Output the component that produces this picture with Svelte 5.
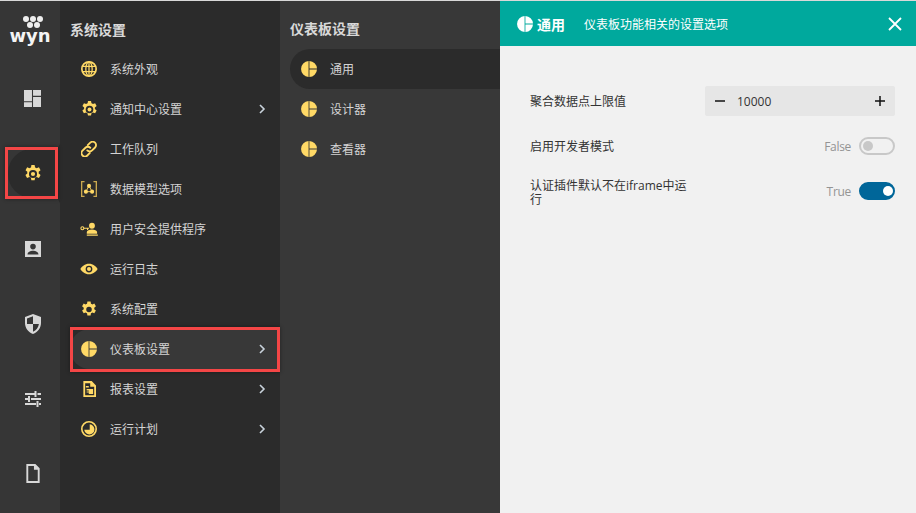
<script>
  const railIcons = ['dash', 'gear', 'contact', 'shield', 'sliders', 'doc'];

  const menu = [
    { label: '系统外观', icon: 'globe' },
    { label: '通知中心设置', icon: 'gearo', more: true },
    { label: '工作队列', icon: 'link' },
    { label: '数据模型选项', icon: 'model' },
    { label: '用户安全提供程序', icon: 'userkey' },
    { label: '运行日志', icon: 'eye' },
    { label: '系统配置', icon: 'cog' },
    { label: '仪表板设置', icon: 'pie', more: true, active: true },
    { label: '报表设置', icon: 'report', more: true },
    { label: '运行计划', icon: 'clock', more: true }
  ];

  const sub = [
    { label: '通用', active: true },
    { label: '设计器' },
    { label: '查看器' }
  ];

  // viewBox, width, height for each icon
  const boxes = {
    dash: ['4 4 16 16', 17, 17],
    gear: ['2 2 20 20', 18, 18],
    contact: ['4 4 16 16', 16, 16],
    shield: ['4 2 16 20', 16, 20],
    sliders: ['4 4 16 16', 16, 16],
    doc: ['5 2 14 20', 14, 19],
    globe: ['2.5 2.5 19 19', 16, 16],
    gearo: ['2 2 20 20', 17, 17],
    link: ['2.5 2.5 19 19', 16, 16],
    model: ['3 3 18 18', 16, 16],
    userkey: ['0 3 24 19', 18, 14],
    eye: ['0 4 24 16', 18, 12],
    cog: ['1 0 22 22.6', 16, 17],
    pie: ['1 1 22 22', 16, 16],
    report: ['3 1 18 22', 13, 16],
    clock: ['1 1 22 22', 16, 16]
  };

  const gear =
    'M10.2 1h3.6l.5 2.7c.6.2 1.2.5 1.7.9l2.6-1 1.8 3.2-2.100 1.800c.1.6.1 1.200 0 1.800l2.100 1.800-1.800 3.200-2.600-1c-.5.4-1.100.7-1.700.9l-.5 2.700h-3.600l-.5-2.700c-.6-.2-1.200-.5-1.700-.9l-2.600 1-1.800-3.200 2.100-1.800c-.1-.6-.1-1.200 0-1.800L3.700 6.800l1.800-3.200 2.600 1c.5-.4 1.100-.7 1.700-.9z';
</script>

{#snippet icon(name)}
  <svg viewBox={boxes[name][0]} width={boxes[name][1]} height={boxes[name][2]} aria-hidden="true">
    {#if name === 'dash'}
      <path d="M4 4h7.500v10.500H4zM12.500 4H20v5.500h-7.500zM12.500 10.500H20V20h-7.500zM4 15.500h7.500V20H4z" />
    {:else if name === 'gear'}
      <g transform="translate(0 1)"><path fill-rule="evenodd" d="{gear}M12 6.500a4.500 4.500 0 1 0 0 9 4.500 4.500 0 0 0 0-9z" /></g>
      <circle cx="12" cy="12" r="2.300" />
    {:else if name === 'contact'}
      <path fill-rule="evenodd" d="M4 4h16v16H4zM12 6.800a2.800 2.800 0 1 0 0 5.600 2.800 2.800 0 0 0 0-5.600zM6.500 17.500h11c0-2.600-3-3.800-5.500-3.800s-5.500 1.200-5.500 3.800z" />
    {:else if name === 'shield'}
      <path fill-rule="evenodd" d="M12 2l8 3v6c0 5-3.300 9.200-8 11-4.700-1.800-8-6-8-11V5zM12 4.200L6 6.400V12h6zM12 12v7.800c3.200-1.400 5.400-4.300 5.900-7.800z" />
    {:else if name === 'sliders'}
      <path d="M4 6h9.500v2H4zM16.500 6H20v2h-3.500zM13.500 4h2v6h-2zM4 11h3v2H4zM10 11h10v2H10zM7 9h2v6H7zM4 16h11v2H4zM18 16h2v2h-2zM15.500 14h2v6h-2z" />
    {:else if name === 'doc'}
      <path fill-rule="evenodd" d="M5 2h9.500L19 6.500V22H5zM7 4v16h10V8h-4V4z" />
    {:else if name === 'globe'}
      <g fill="none" stroke="#ffd966" stroke-width="1.500"><circle cx="12" cy="12" r="8.500" stroke-width="2" /><ellipse cx="12" cy="12" rx="3.800" ry="8.500" /><path d="M4 9h16M4 15h16M12 3v18" /></g>
    {:else if name === 'gearo'}
      <g transform="translate(0 1)"><path fill-rule="evenodd" d="{gear}M12 6.500a4.500 4.500 0 1 0 0 9 4.500 4.500 0 0 0 0-9z" /></g>
      <circle cx="12" cy="12" r="2.300" />
    {:else if name === 'link'}
      <g fill="none" stroke="#ffd966" stroke-width="2.200" stroke-linecap="round"><path d="M10.500 7.500l3-3a4 4 0 0 1 5.700 5.700l-3.500 3.500a4 4 0 0 1-5.700 0" /><path d="M13.500 10.500a4 4 0 0 0-5.700 0l-3.500 3.500a4 4 0 0 0 5.700 5.700l3-3" /></g>
    {:else if name === 'model'}
      <path d="M7 3H3v18h4v-1.500H4.500v-15H7zM17 3h4v18h-4v-1.500h2.500v-15H17z" fill="#c9a84f" />
      <path d="M12 8.500l-3.500 6.500h7z" fill="none" stroke="#ffd966" />
      <circle cx="12" cy="8.500" r="2.300" /><circle cx="8.500" cy="15" r="2.300" /><circle cx="15.500" cy="15" r="2.300" />
    {:else if name === 'userkey'}
      <circle cx="16" cy="8" r="4" /><path d="M9 19v-2c0-2.500 3.500-3.800 7-3.800s7 1.300 7 3.800v2zM9 20h15v1.500H9z" />
      <circle cx="3" cy="11.500" r="2" fill="none" stroke="#ffd966" stroke-width="1.500" /><path d="M5 10.800h7v1.500h-1.200v1.500H9.300v-1.500H5z" />
    {:else if name === 'eye'}
      <path fill-rule="evenodd" d="M12 5c5.500 0 9.500 3.500 11.500 7-2 3.500-6 7-11.500 7S2.500 15.500.5 12C2.500 8.500 6.500 5 12 5zM12 7.500a4.500 4.500 0 1 0 0 9 4.500 4.500 0 0 0 0-9z" />
      <circle cx="12" cy="12" r="2.700" />
    {:else if name === 'cog'}
      <path fill-rule="evenodd" d="M9.800 1h4.400l.5 2.900c.7.200 1.300.6 1.900 1l2.700-1.100 2.200 3.800-2.300 1.900c.1.700.1 1.300 0 2l2.300 1.900-2.200 3.800-2.700-1.100c-.6.400-1.200.8-1.900 1l-.5 2.900H9.800l-.5-2.900c-.7-.2-1.300-.6-1.900-1l-2.700 1.100-2.200-3.800 2.300-1.900c-.1-.7-.1-1.300 0-2L2.500 7.600l2.200-3.800 2.700 1.100c.6-.4 1.200-.8 1.900-1zM12 8.200a3.800 3.800 0 1 0 0 7.600 3.800 3.800 0 0 0 0-7.600z" transform="translate(0 -.6)" />
    {:else if name === 'pie'}
      <path d="M11.400 1.020A11 11 0 0 0 11.400 22.980zM12.600 1.020A11 11 0 0 1 22.980 11.400H12.600zM12.600 22.980A11 11 0 0 0 22.980 12.600H12.600z" />
    {:else if name === 'report'}
      <path fill-rule="evenodd" d="M3.500 1H15l6 6v16H3.500zM6 4v16.500h12.500V9H13V4zM7 8h4v2H7z" />
      <path d="M8 12h9v7h-6v-2H8v-1.500h3V14H8z" />
    {:else if name === 'clock'}
      <path fill-rule="evenodd" d="M12 1a11 11 0 1 1 0 22 11 11 0 0 1 0-22zM12 3.200a8.800 8.800 0 1 0 0 17.600 8.800 8.800 0 0 0 0-17.600z" />
      <path d="M13 5.500a7 7 0 1 1-7.500 7.500H13z" />
    {/if}
  </svg>
{/snippet}

<div class="shell">
  <nav class="rail">
    <div class="logo">
      <div class="dots">
        <span></span><span></span><span></span>
        <span></span><span></span>
      </div>
      <div class="wyn">wyn</div>
    </div>
    {#each railIcons as name}
      <div class="rail-item" class:active={name === 'gear'}>{@render icon(name)}</div>
    {/each}
  </nav>

  <section class="menu">
    <h2>系统设置</h2>
    {#each menu as item}
      <div class="row" class:active={item.active}>
        <span class="ico">{@render icon(item.icon)}</span>
        <span class="label">{item.label}</span>
        {#if item.more}
          <svg class="chev" viewBox="0 0 8 12" width="8" height="12"><path d="M2 2l4 4-4 4" fill="none" stroke="#c9d3dc" stroke-width="1.600" /></svg>
        {/if}
      </div>
    {/each}
  </section>

  <section class="submenu">
    <h2>仪表板设置</h2>
    {#each sub as item}
      <div class="row" class:active={item.active}>
        <span class="ico">{@render icon('pie')}</span>
        <span class="label">{item.label}</span>
      </div>
    {/each}
  </section>

  <main class="detail">
    <header>
      <span class="head-ico">{@render icon('pie')}</span>
      <strong>通用</strong>
      <span class="desc">仪表板功能相关的设置选项</span>
      <svg class="close" viewBox="0 0 14 14" width="14" height="14"><path d="M1 1l12 12M13 1L1 13" stroke="#fff" stroke-width="1.800" fill="none" /></svg>
    </header>

    <div class="form">
      <div class="field">
        <span class="name">聚合数据点上限值</span>
        <div class="stepper">
          <svg viewBox="0 0 12 12" width="12" height="12"><path d="M1 6h10" stroke="#111" stroke-width="1.500" /></svg>
          <span class="num">10000</span>
          <svg viewBox="0 0 12 12" width="12" height="12"><path d="M1 6h10M6 1v10" stroke="#111" stroke-width="1.500" /></svg>
        </div>
      </div>
      <div class="field">
        <span class="name">启用开发者模式</span>
        <span class="state">False</span>
        <span class="toggle"></span>
      </div>
      <div class="field third">
        <span class="name">认证插件默认不在iframe中运行</span>
        <span class="state">True</span>
        <span class="toggle on"></span>
      </div>
    </div>
  </main>

  <div class="mark mark-rail"></div>
  <div class="mark mark-menu"></div>
</div>

<style>
  :global(body) {
    margin: 0;
    background: #2b2b2b;
  }

  .shell {
    position: relative;
    display: flex;
    width: 916px;
    height: 513px;
    box-sizing: border-box;
    border-top: 1px solid #d9d9d9;
    overflow: hidden;
    font-family: "Open Sans", "Noto Sans CJK SC", sans-serif;
    font-size: 12px;
  }

  svg {
    display: block;
    flex: none;
  }

  .rail {
    width: 60px;
    flex: none;
    background: #363636;
  }

  .logo {
    height: 60px;
    display: flex;
    flex-direction: column;
    align-items: center;
    padding-top: 15px;
    box-sizing: border-box;
  }

  .dots {
    width: 21px;
    margin-left: 6px;
    display: flex;
    flex-wrap: wrap;
    justify-content: center;
    gap: 0 1px;
  }

  .dots span {
    width: 6px;
    height: 6px;
    border-radius: 50%;
    background: #eee;
  }

  .wyn {
    font-family: "DejaVu Sans", sans-serif;
    font-weight: 700;
    font-size: 18px;
    line-height: 16px;
    color: #f4f4f4;
  }

  .rail-item {
    height: 75px;
    display: flex;
    align-items: center;
    justify-content: center;
    padding-left: 5px;
    fill: #d8d8d8;
  }

  .rail-item.active {
    position: relative;
    fill: #ffd966;
  }

  .rail-item.active::before {
    content: "";
    position: absolute;
    left: 8px;
    right: 0;
    top: 13px;
    bottom: 13px;
    background: #2b2b2b;
    border-radius: 24px 0 0 24px;
  }

  /* concave corners where the active pill joins the menu panel */
  .rail-item.active::after {
    content: "";
    position: absolute;
    right: 0;
    width: 6px;
    top: 7px;
    bottom: 7px;
    background:
      radial-gradient(circle at 0 0, #363636 5.5px, #2b2b2b 6px) top / 6px 6px no-repeat,
      radial-gradient(circle at 0 100%, #363636 5.5px, #2b2b2b 6px) bottom / 6px 6px no-repeat;
  }

  .rail-item.active svg {
    position: relative;
  }

  .menu,
  .submenu {
    width: 220px;
    flex: none;
    box-sizing: border-box;
    padding-left: 10px;
    color: #d4d4d4;
  }

  .menu {
    background: #2b2b2b;
  }

  .submenu {
    background: #383838;
  }

  h2 {
    margin: 0;
    height: 48px;
    line-height: 57px;
    font-size: 14px;
    font-weight: 700;
    color: #d9d9d9;
  }

  .submenu h2 {
    line-height: 55px;
  }

  .row {
    height: 40px;
    display: flex;
    align-items: center;
    padding-left: 10px;
    padding-right: 14px;
    border-radius: 20px 0 0 20px;
    fill: #ffd966;
  }

  .ico {
    display: flex;
    justify-content: center;
    flex: none;
    width: 30px;
    margin-left: -6px;
    padding-right: 6px;
  }

  .label {
    flex: 1;
  }

  .menu .row.active {
    background: #383838;
  }

  .submenu .row.active {
    background: #2b2b2b;
  }

  .detail {
    flex: 1;
    background: #f1f1f1;
    color: #333;
  }

  header {
    height: 45px;
    background: #00a99d;
    color: #fff;
    display: flex;
    align-items: center;
    padding: 0 14px 0 17px;
    fill: #fff;
  }

  header strong {
    margin-left: 4px;
    font-size: 14px;
    font-weight: 700;
  }

  .desc {
    margin-left: 19px;
    flex: 1;
  }

  .form {
    padding: 40px 21px 0 30px;
  }

  .field {
    display: flex;
    align-items: center;
    min-height: 30px;
    margin-bottom: 15px;
  }

  .field.third {
    margin-top: -1px;
  }

  .name {
    width: 160px;
    margin-right: auto;
    line-height: 14px;
    padding-top: 2px;
  }

  .third .name {
    padding-top: 4px;
  }

  .stepper {
    width: 190px;
    height: 30px;
    box-sizing: border-box;
    background: #e6e6e6;
    border-radius: 2px;
    display: flex;
    align-items: center;
    padding: 0 9px;
  }

  .num {
    flex: 1;
    margin-left: 11px;
  }

  .state {
    color: #949494;
    letter-spacing: -0.3px;
    margin-right: 8px;
  }

  .toggle {
    position: relative;
    width: 36px;
    height: 18px;
    box-sizing: border-box;
    border: 2px solid #c8c8c8;
    border-radius: 9px;
  }

  .toggle::after {
    content: "";
    position: absolute;
    left: 2px;
    top: 2px;
    width: 10px;
    height: 10px;
    border-radius: 50%;
    background: #c8c8c8;
  }

  .toggle.on {
    background: #006699;
    border-color: #006699;
  }

  .toggle.on::after {
    left: 22px;
    background: #fff;
  }

  .mark {
    position: absolute;
    box-sizing: border-box;
    border: 3px solid #f44646;
    box-shadow: 0 0 4px rgba(0, 0, 0, 0.4);
  }

  .mark-rail {
    left: 5px;
    top: 146px;
    width: 53px;
    height: 52px;
  }

  .mark-menu {
    left: 70px;
    top: 326px;
    width: 210px;
    height: 45px;
  }
</style>
